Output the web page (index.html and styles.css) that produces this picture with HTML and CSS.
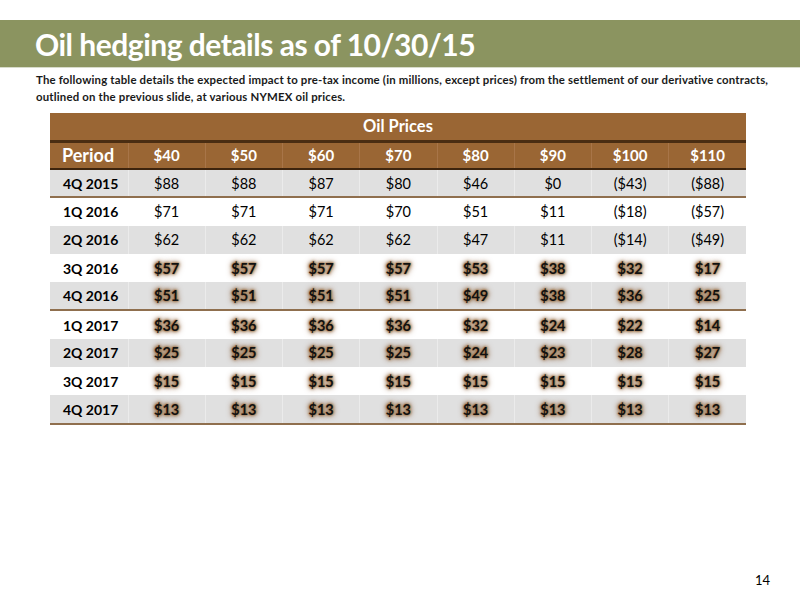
FILE: index.html
```html
<!DOCTYPE html>
<html>
<head>
<meta charset="utf-8">
<link rel="stylesheet" href="styles.css">
</head>
<body>
<div class="slide">
  <div class="titlebar"><h1 class="title">Oil hedging details as of 10/30/15</h1></div>
  <p class="intro">The following table details the expected impact to pre-tax income (in millions, except prices) from the settlement of our derivative contracts, outlined on the previous slide, at various NYMEX oil prices.</p>
  <table class="grid">
    <colgroup><col class="c-period"><col><col><col><col><col><col><col><col></colgroup>
    <thead>
      <tr class="h1"><th colspan="9">Oil Prices</th></tr>
      <tr class="h2"><th class="period">Period</th><th>$40</th><th>$50</th><th>$60</th><th>$70</th><th>$80</th><th>$90</th><th>$100</th><th>$110</th></tr>
    </thead>
    <tbody>
      <tr class="gray sep"><td class="period">4Q 2015</td><td>$88</td><td>$88</td><td>$87</td><td>$80</td><td>$46</td><td>$0</td><td>($43)</td><td>($88)</td></tr>
      <tr><td class="period">1Q 2016</td><td>$71</td><td>$71</td><td>$71</td><td>$70</td><td>$51</td><td>$11</td><td>($18)</td><td>($57)</td></tr>
      <tr class="gray"><td class="period">2Q 2016</td><td>$62</td><td>$62</td><td>$62</td><td>$62</td><td>$47</td><td>$11</td><td>($14)</td><td>($49)</td></tr>
      <tr class="hl"><td class="period">3Q 2016</td><td>$57</td><td>$57</td><td>$57</td><td>$57</td><td>$53</td><td>$38</td><td>$32</td><td>$17</td></tr>
      <tr class="hl gray sep"><td class="period">4Q 2016</td><td>$51</td><td>$51</td><td>$51</td><td>$51</td><td>$49</td><td>$38</td><td>$36</td><td>$25</td></tr>
      <tr class="hl"><td class="period">1Q 2017</td><td>$36</td><td>$36</td><td>$36</td><td>$36</td><td>$32</td><td>$24</td><td>$22</td><td>$14</td></tr>
      <tr class="hl gray"><td class="period">2Q 2017</td><td>$25</td><td>$25</td><td>$25</td><td>$25</td><td>$24</td><td>$23</td><td>$28</td><td>$27</td></tr>
      <tr class="hl"><td class="period">3Q 2017</td><td>$15</td><td>$15</td><td>$15</td><td>$15</td><td>$15</td><td>$15</td><td>$15</td><td>$15</td></tr>
      <tr class="hl gray sep"><td class="period">4Q 2017</td><td>$13</td><td>$13</td><td>$13</td><td>$13</td><td>$13</td><td>$13</td><td>$13</td><td>$13</td></tr>
    </tbody>
  </table>
  <div class="pagenum">14</div>
</div>
</body>
</html>
```
FILE: styles.css
```css
* { box-sizing: border-box; }
html, body { margin: 0; padding: 0; background: #fff; }
body { font-family: Lato, "Open Sans", sans-serif; color: #000; }
.slide { width: 800px; height: 600px; position: relative; padding-top: 20px; }
.titlebar { background: #8b9460; height: 48px; display: flex; align-items: center; padding-left: 35px; border-bottom: 1px solid #d8dccb; }
.title { margin: 0; color: #fff; font-weight: 700; font-size: 30px; letter-spacing: -0.5px; }
.intro { margin: 3px 0 0 36px; width: 760px; font-size: 11.4px; line-height: 17px; font-weight: 700; color: #1a1a1a; letter-spacing: 0.18px; }
.grid { margin: 8px 0 0 50px; width: 696px; border-collapse: collapse; table-layout: fixed; }
.c-period { width: 78px; }
.grid th, .grid td { padding: 0; text-align: center; }
.h1 th { background: #9a6634; color: #fff; height: 28px; font-size: 16.5px; font-weight: 700; border-bottom: 3px solid #4a2d12; }
.h2 th { background: #9a6634; color: #fff; height: 28px; font-size: 15px; font-weight: 700; border-bottom: 2px solid #3d240d; border-left: 1px solid #a87548; }
.h2 th:first-child { border-left: none; }
.h2 th.period { font-size: 18px; text-align: left; padding-left: 12px; }
.grid td { height: 28.3px; font-size: 14.5px; font-weight: 400; border-left: 1px solid rgba(255,255,255,0.35); }
.grid td.period { text-align: left; padding-left: 13px; font-weight: 700; font-size: 14px; border-left: none; }
.gray td { background: #e0e0e0; }
.sep td { border-bottom: 2px solid #8f6f4e; }
.hl td:not(.period) { font-weight: 700; color: #111; text-shadow: 0 0 1px #a47b50, 0 0 2px #a47b50, 0 0 3px #a47b50, 0 0 4px #9a7047, 0 0 6px #7a5533; }
.pagenum { position: absolute; left: 755px; top: 572px; font-size: 13px; }
```
